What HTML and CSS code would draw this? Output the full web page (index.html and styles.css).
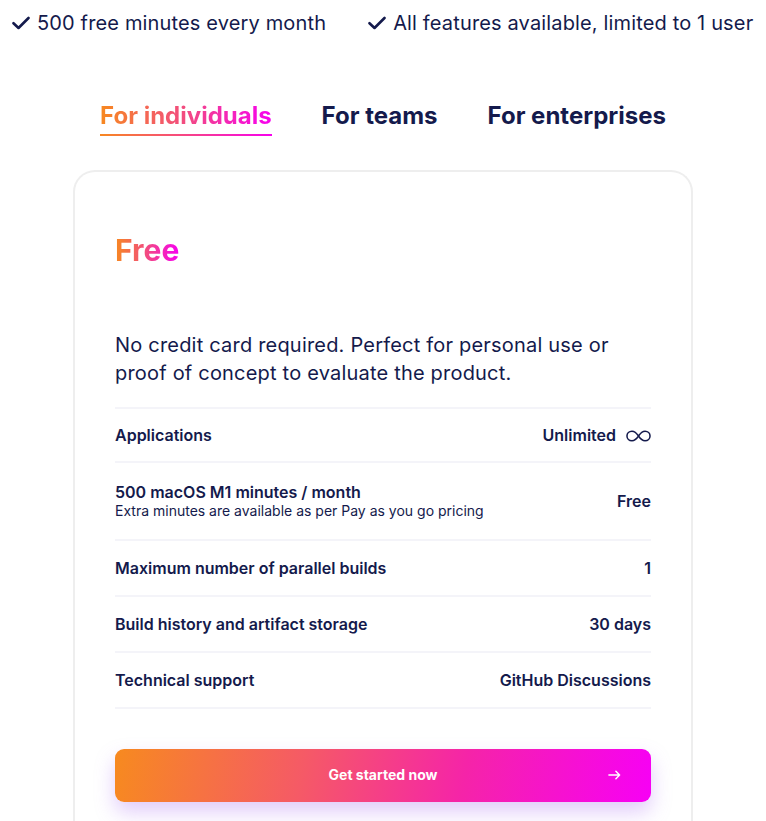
FILE: index.html
```html
<!DOCTYPE html>
<html lang="en">
<head>
<meta charset="utf-8">
<title>Pricing</title>
<link rel="stylesheet" href="styles.css">
</head>
<body>
<div class="page">
  <ul class="perks">
    <li class="perk">
      <svg class="check" viewBox="0 0 18 14" width="18" height="14"><path d="M1.5 7.2 L6.5 12 L16.5 2" fill="none" stroke="currentColor" stroke-width="2.6" stroke-linecap="round" stroke-linejoin="round"/></svg>
      <span>500 free minutes every month</span>
    </li>
    <li class="perk">
      <svg class="check" viewBox="0 0 18 14" width="18" height="14"><path d="M1.5 7.2 L6.5 12 L16.5 2" fill="none" stroke="currentColor" stroke-width="2.6" stroke-linecap="round" stroke-linejoin="round"/></svg>
      <span>All features available, limited to 1 user</span>
    </li>
  </ul>

  <nav class="tabs">
    <a class="tab active"><span class="grad-text">For individuals</span></a>
    <a class="tab">For teams</a>
    <a class="tab">For enterprises</a>
  </nav>

  <section class="card">
    <h2 class="plan grad-text">Free</h2>
    <p class="desc">No credit card required. Perfect for personal use or proof of concept to evaluate the product.</p>
    <div class="rows">
      <div class="row first">
        <div class="label">Applications</div>
        <div class="value">Unlimited
          <svg class="inf" viewBox="0 0 26 12" width="25" height="12"><path d="M13 6 C10.5 2.2 8.5 1 6.2 1 C3.3 1 1 3.2 1 6 C1 8.8 3.3 11 6.2 11 C8.5 11 10.5 9.8 13 6 C15.5 2.2 17.5 1 19.8 1 C22.7 1 25 3.2 25 6 C25 8.8 22.7 11 19.8 11 C17.5 11 15.5 9.8 13 6 Z" fill="none" stroke="currentColor" stroke-width="1.6"/></svg>
        </div>
      </div>
      <div class="row tall">
        <div class="label">500 macOS M1 minutes / month<small>Extra minutes are available as per Pay as you go pricing</small></div>
        <div class="value">Free</div>
      </div>
      <div class="row">
        <div class="label">Maximum number of parallel builds</div>
        <div class="value">1</div>
      </div>
      <div class="row">
        <div class="label">Build history and artifact storage</div>
        <div class="value">30 days</div>
      </div>
      <div class="row">
        <div class="label">Technical support</div>
        <div class="value">GitHub Discussions</div>
      </div>
    </div>
    <a class="cta">
      <span>Get started now</span>
      <svg class="arrow" viewBox="0 0 14 10" width="13" height="10"><path d="M1 5 H12.5 M8.5 1 L12.5 5 L8.5 9" fill="none" stroke="currentColor" stroke-width="1.6" stroke-linecap="round" stroke-linejoin="round"/></svg>
    </a>
  </section>
</div>
</body>
</html>
```

FILE: styles.css
```css
* { box-sizing: border-box; }
html, body { margin: 0; padding: 0; background: #fff; }
body {
  font-family: "Inter", "Noto Sans", sans-serif;
  color: #141a4c;
  overflow: hidden;
}
.page {
  width: 766px;
  height: 821px;
  overflow: hidden;
}
.perks {
  list-style: none;
  margin: 0;
  padding: 10px 0 0 12px;
  display: flex;
  gap: 42px;
  height: 45px;
}
.perk {
  display: flex;
  align-items: center;
  gap: 7px;
  font-size: 20px;
  letter-spacing: 0.15px;
  height: 25px;
  white-space: nowrap;
}
.check { color: #141a4c; flex: none; }

.tabs {
  display: flex;
  justify-content: center;
  gap: 50px;
  margin-top: 54px;
  height: 71px;
  font-size: 24px;
  font-weight: 700;
}
.tab {
  display: block;
  height: 37px;
  line-height: 33px;
  color: #141a4c;
}
.tab.active {
  border-bottom: 2px solid transparent;
  border-image: linear-gradient(90deg, #f7891f, #f700ee) 1;
}
.grad-text {
  background: linear-gradient(90deg, #f7891f 0%, #f24a82 50%, #f700f0 100%);
  -webkit-background-clip: text;
  background-clip: text;
  color: transparent;
}

.card {
  margin: 0 73px 0 73px;
  width: 620px;
  border: 2px solid #eeeeee;
  border-bottom: none;
  border-radius: 22px 22px 0 0;
  padding: 58px 40px 60px 40px;
  height: 700px;
}
.plan {
  margin: 0;
  font-size: 30px;
  font-weight: 700;
  line-height: 40px;
  display: inline-block;
}
.desc {
  margin: 61px 0 0 0;
  font-size: 20px;
  letter-spacing: 0.2px;
  line-height: 28px;
  width: 515px;
}
.rows {
  margin-top: 20px;
  border-top: 2px solid #f4f4f9;
}
.row {
  display: flex;
  justify-content: space-between;
  align-items: center;
  height: 56px;
  border-bottom: 2px solid #f4f4f9;
  font-size: 16px;
  font-weight: 600;
}
.row.first { height: 54px; }
.row.tall { height: 78px; }
.label small {
  display: block;
  font-size: 14px;
  font-weight: 400;
  line-height: 18px;
}
.label { line-height: 20px; }
.value {
  display: flex;
  align-items: center;
  gap: 10px;
}
.inf { margin-top: 1px; }
.cta {
  margin-top: 40px;
  height: 53px;
  padding-bottom: 3px;
  border-radius: 9px;
  background: linear-gradient(100deg, #f78a1f 0%, #f55a66 35%, #f524a8 65%, #f700f5 100%);
  box-shadow: 0 10px 20px rgba(170, 110, 240, 0.35);
  color: #fff;
  font-size: 14px;
  font-weight: 700;
  display: flex;
  align-items: center;
  justify-content: center;
  position: relative;
}
.arrow {
  position: absolute;
  right: 30px;
  top: 21px;
}
```
